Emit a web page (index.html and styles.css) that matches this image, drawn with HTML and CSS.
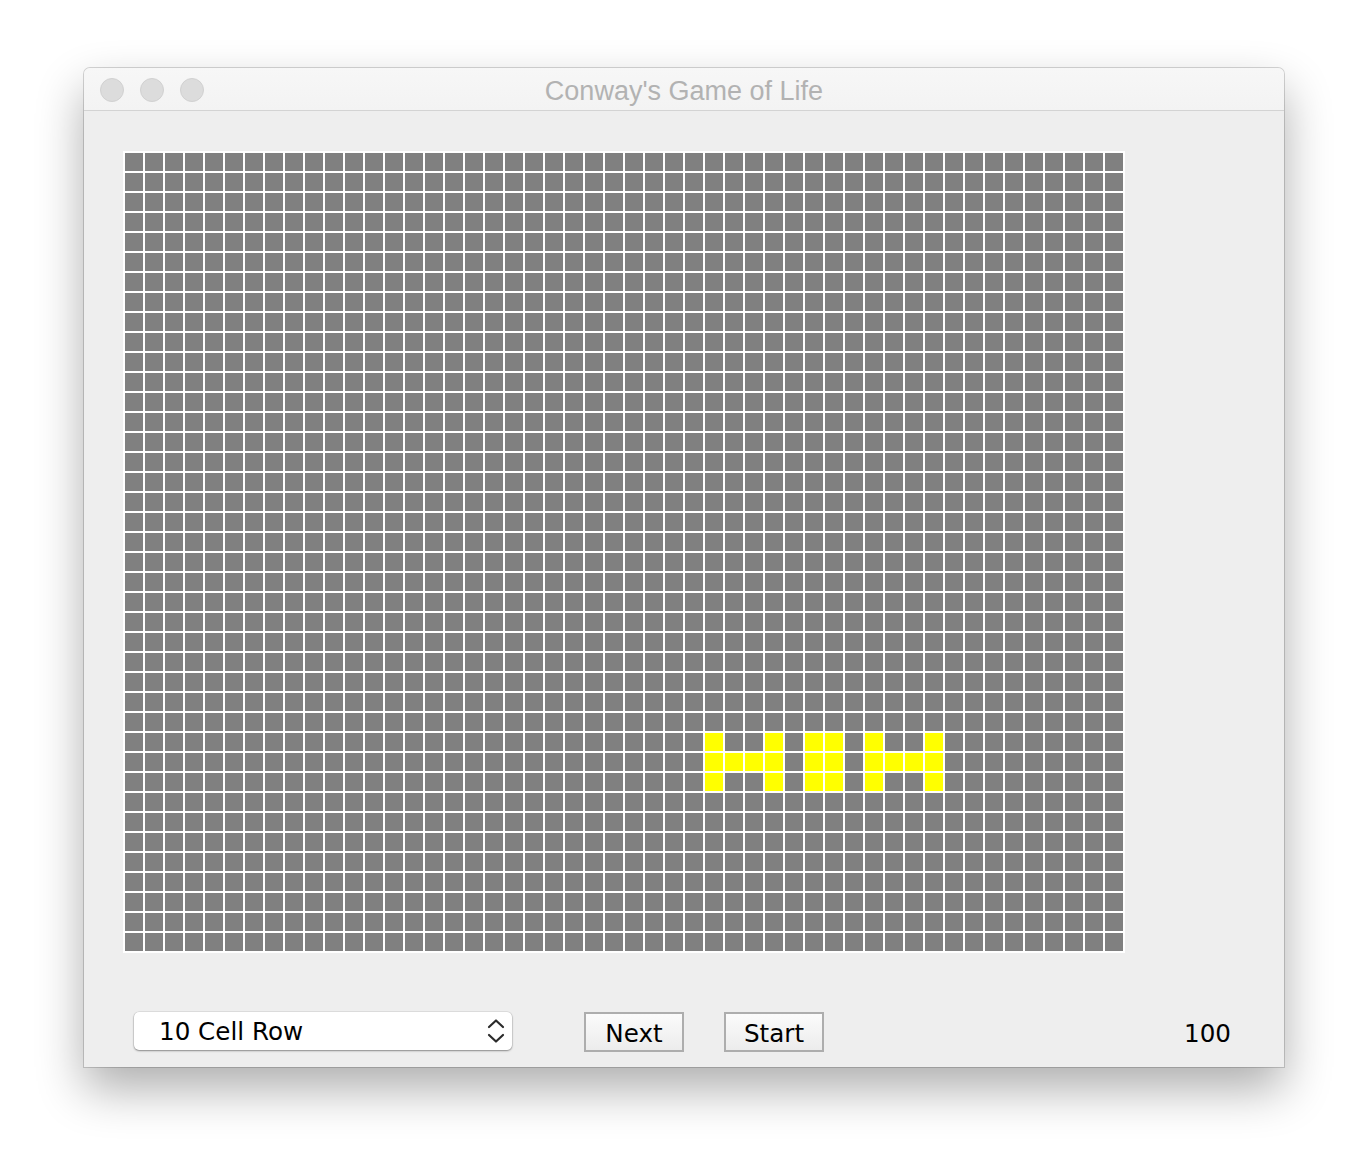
FILE: index.html
```html
<!DOCTYPE html>
<html>
<head>
<meta charset="utf-8">
<title>Conway's Game of Life</title>
<link rel="stylesheet" href="styles.css">
</head>
<body>
<div class="window">
  <div class="titlebar">
    <div class="lights">
      <span class="light"></span>
      <span class="light"></span>
      <span class="light"></span>
    </div>
    <div class="title">Conway's Game of Life</div>
  </div>
  <div class="content">
    <div class="board">
      <div class="cell on" style="grid-area:30/30"></div>
      <div class="cell on" style="grid-area:30/33"></div>
      <div class="cell on" style="grid-area:30/35"></div>
      <div class="cell on" style="grid-area:30/36"></div>
      <div class="cell on" style="grid-area:30/38"></div>
      <div class="cell on" style="grid-area:30/41"></div>
      <div class="cell on" style="grid-area:31/30"></div>
      <div class="cell on" style="grid-area:31/31"></div>
      <div class="cell on" style="grid-area:31/32"></div>
      <div class="cell on" style="grid-area:31/33"></div>
      <div class="cell on" style="grid-area:31/35"></div>
      <div class="cell on" style="grid-area:31/36"></div>
      <div class="cell on" style="grid-area:31/38"></div>
      <div class="cell on" style="grid-area:31/39"></div>
      <div class="cell on" style="grid-area:31/40"></div>
      <div class="cell on" style="grid-area:31/41"></div>
      <div class="cell on" style="grid-area:32/30"></div>
      <div class="cell on" style="grid-area:32/33"></div>
      <div class="cell on" style="grid-area:32/35"></div>
      <div class="cell on" style="grid-area:32/36"></div>
      <div class="cell on" style="grid-area:32/38"></div>
      <div class="cell on" style="grid-area:32/41"></div>
    </div>
    <div class="controls">
      <div class="select">
        <span class="select-text">10 Cell Row</span>
        <svg class="chev" width="20" height="26" viewBox="0 0 20 26">
          <path d="M3 9 L10 2.5 L17 9" fill="none" stroke="#2b2b2b" stroke-width="2.2" stroke-linecap="round" stroke-linejoin="round"/>
          <path d="M3 17 L10 23.5 L17 17" fill="none" stroke="#2b2b2b" stroke-width="2.2" stroke-linecap="round" stroke-linejoin="round"/>
        </svg>
      </div>
      <div class="btn btn-next">Next</div>
      <div class="btn">Start</div>
      <div class="count">100</div>
    </div>
  </div>
</div>
</body>
</html>
```

FILE: styles.css
```css
html, body {
  margin: 0;
  padding: 0;
  background: #ffffff;
}

body {
  padding: 68px 0 0 84px;
  height: 1100px;
}

.window {
  width: 1200px;
  height: 999px;
  background: #eeeeee;
  border-radius: 6px 6px 0 0;
  box-shadow: 0 0 0 1px rgba(0, 0, 0, 0.16), 0 22px 48px rgba(0, 0, 0, 0.32);
  display: flex;
  flex-direction: column;
  overflow: hidden;
}

.titlebar {
  height: 42px;
  border-bottom: 1px solid #d3d3d3;
  background: linear-gradient(#f7f7f7, #f3f3f3);
  display: flex;
  align-items: center;
  position: relative;
}

.lights {
  display: flex;
  gap: 16px;
  padding-left: 16px;
  padding-top: 2px;
}

.light {
  width: 22px;
  height: 22px;
  border-radius: 50%;
  background: #dcdcdc;
  border: 1px solid #d1d1d1;
}

.title {
  position: absolute;
  left: 0;
  right: 0;
  top: 0;
  line-height: 46px;
  text-align: center;
  font-family: "Liberation Sans", Arial, sans-serif;
  font-size: 27px;
  color: #b2b2b2;
}

.content {
  padding: 40px 0 0 39px;
}

.board {
  width: 1000px;
  height: 800px;
  border-right: 2px solid #ffffff;
  border-bottom: 2px solid #ffffff;
  background-color: #808080;
  background-image:
    linear-gradient(90deg, #ffffff 2px, transparent 2px),
    linear-gradient(#ffffff 2px, transparent 2px);
  background-size: 20px 20px;
  background-clip: padding-box;
  box-sizing: content-box;
  display: grid;
  grid-template-columns: repeat(50, 18px);
  grid-template-rows: repeat(40, 18px);
  gap: 2px;
  padding: 0;
  align-content: start;
  justify-content: start;
}

.board .cell {
  margin: 2px 0 0 2px;
  width: 18px;
  height: 18px;
}

.cell.on {
  background: #ffff00;
}

.controls {
  display: flex;
  align-items: flex-start;
  margin-top: 59px;
  padding-left: 11px;
  font-family: "DejaVu Sans", "Lucida Grande", sans-serif;
  font-size: 24.6px;
  color: #000000;
}

.select {
  width: 378px;
  height: 38px;
  background: #ffffff;
  border-radius: 5px;
  box-shadow: 0 0 0 0.5px rgba(0, 0, 0, 0.12), 0 1px 2px rgba(0, 0, 0, 0.38);
  display: flex;
  align-items: center;
  justify-content: space-between;
  padding: 0 6px 0 25px;
  box-sizing: border-box;
  margin-right: 72px;
}

.select-text {
  line-height: 38px;
  padding-top: 1px;
}

.chev {
  display: block;
}

.btn {
  width: 100px;
  height: 40px;
  box-sizing: border-box;
  border: 2px solid #adadad;
  background: linear-gradient(#fbfbfb, #ececec);
  display: flex;
  align-items: center;
  justify-content: center;
  line-height: 36px;
  padding-top: 3px;
}

.btn-next {
  margin-right: 40px;
}

.count {
  margin-left: auto;
  margin-right: 53px;
  line-height: 40px;
  padding-top: 2px;
}
```
